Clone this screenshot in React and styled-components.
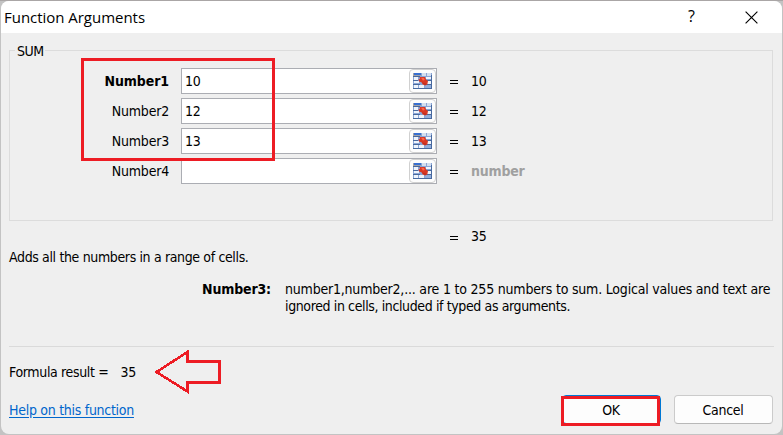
import React from "react";
import styled, { createGlobalStyle } from "styled-components";

const GlobalStyle = createGlobalStyle`
  * { box-sizing: border-box; }
  body { margin: 0; background: #c6c6c6; overflow: hidden; }
`;

const RED = "#ed1c24";

const Desktop = styled.div`
  width: 783px;
  height: 435px;
  padding: 1px;
  background: linear-gradient(#aaa6a6 0 1px, #c3c3c3 1px);
  font: 14px/17px "DejaVu Sans Condensed", "DejaVu Sans", sans-serif;
  color: #000;
`;

const Dialog = styled.main`
  position: relative;
  display: flex;
  flex-direction: column;
  height: 433px;
  border-radius: 8px;
  background: #efefef;
  overflow: hidden;
`;

const TitleBar = styled.header`
  display: flex;
  align-items: center;
  height: 32px;
  padding: 0 24px 0 3px;
  background: #fff;
`;

const Title = styled.h1`
  flex: 1;
  margin: 0;
  font: 400 15px/20px "Open Sans", "Noto Sans", sans-serif;
  letter-spacing: -0.03px;
`;

const HelpMark = styled.span`
  width: 57px;
  margin-top: -2px;
  font: 16px/20px "Open Sans", sans-serif;
`;

const Text = styled.span`
  white-space: nowrap;
  font-weight: ${(p) => (p.$bold ? 700 : 400)};
  letter-spacing: ${(p) => p.$track ?? -0.2}px;
  color: ${(p) => p.$color ?? "inherit"};
`;

const Group = styled.fieldset`
  height: 180px;
  margin: 8px 9px 0 8px;
  padding: 8px 0 0;
  border: 1px solid #dcdcdc;
  min-width: 0;
`;

const Legend = styled.legend`
  margin-left: 5px;
  padding: 2px 1px 0 2px;
  line-height: 17px;
  letter-spacing: -0.5px;
`;

const ArgumentRow = styled.div`
  display: grid;
  grid-template-columns: 159px 256px 10px 1fr;
  column-gap: 12px;
  align-items: center;
  height: 26px;
  margin-bottom: 4px;
`;

const Label = styled(Text)`
  text-align: right;
`;

const Field = styled.div`
  display: flex;
  align-items: center;
  justify-content: space-between;
  height: 26px;
  padding-left: 3px;
  border: 1px solid #abadb3;
  background: #fff;
`;

const Picker = styled.button`
  display: flex;
  align-items: center;
  justify-content: center;
  width: 27px;
  height: 24px;
  padding: 0;
  border: 1px solid #d0d0d0;
  border-radius: 4px;
  background: #fdfdfd;
`;

const Equals = styled.span`
  display: flex;
  width: 8px;
  height: 4px;
  margin: 2px 0 0 1px;
  border-top: 1px solid #000;
  border-bottom: 1px solid #000;
`;

const Total = styled.div`
  display: flex;
  align-items: center;
  gap: 13px;
  height: 17px;
  margin: 7px 0 0 448px;
`;

const Summary = styled.p`
  height: 17px;
  margin: 4px 0 0 8px;
`;

const Description = styled.div`
  display: flex;
  gap: 14px;
  margin: 15px 0 0 201px;
`;

const Lines = styled.div`
  display: flex;
  flex-direction: column;
`;

const Divider = styled.hr`
  width: 765px;
  height: 1px;
  margin: 31px 0 0 8px;
  border: 0;
  background: #dadada;
`;

const Result = styled.div`
  display: flex;
  gap: 12px;
  height: 17px;
  margin: 17px 0 0 8px;
`;

const Footer = styled.footer`
  display: flex;
  align-items: flex-start;
  height: 30px;
  margin: 14px 9px 0 8px;
`;

const HelpLink = styled.a`
  flex: 1;
  margin-top: 7px;
  color: #0066cc;
  text-decoration: underline;
  text-underline-offset: 2px;
  letter-spacing: -0.28px;
`;

const Button = styled.button`
  width: 99px;
  height: 29px;
  margin-left: 13px;
  padding: 2px 1px 0 0;
  border: 1px solid ${(p) => (p.$primary ? "#0078d4" : "#cbcbcb")};
  border-bottom-color: ${(p) => (p.$primary ? "#0078d4" : "#b8b8b8")};
  border-radius: 4px;
  background: #fdfdfd;
  color: #000;
  font: inherit;
  letter-spacing: -0.25px;
`;

const Highlight = styled.div`
  position: absolute;
  left: ${(p) => p.$x}px;
  top: ${(p) => p.$y}px;
  width: ${(p) => p.$w}px;
  height: ${(p) => p.$h}px;
  border: 3px solid ${RED};
  pointer-events: none;
`;

const Arrow = styled.svg`
  position: absolute;
  left: 153px;
  top: 346px;
`;

const CloseIcon = () => (
  <svg width="13" height="13" viewBox="0 0 13 13" fill="none" stroke="#000" strokeWidth="1.15">
    <path d="M.6 .6 12.4 12.4M12.4 .6 .6 12.4" />
  </svg>
);

const RangeIcon = () => (
  <svg width="19" height="16" viewBox="0 0 19 16" shapeRendering="crispEdges">
    <path fill="#8aa5d5" d="M0 0h19v16H0z" />
    <path fill="#a2a3a8" d="M0 0h8v3H0z" />
    <path fill="#376fd2" d="M1 0h7v2H1z" />
    <path fill="#d4dff0" d="M9 0h4v3H9zM14 0h4v3h-4z" />
    <path fill="#eff4fc" d="M1 4h4v3H1zM1 8h5v2H1zM13 4h5v2h-5zM14 8h4v3h-4zM1 12h4v3H1zM6 12h5v3H6z" />
    <path fill="#48699f" d="M0 3h7v1H0zM0 7h5v1H0zM0 11h7v1H0zM13 7h6v1h-6zM12 11h7v1h-7zM0 15h19v1H0zM18 2h1v14h-1z" />
    <path fill="#91addb" d="M12 12h6v3h-6z" />
    <g shapeRendering="auto">
      <path fill="#d93623" d="M6.500 4 12 4 13 6.500 15 8 14.300 11.500 12 12.500 9.500 11.300 8.500 9.200 6 8.500 5.500 6.300 7.200 6z" />
      <path fill="#ff6546" d="m8 4.700 3 .3.8 2-2 .4z" />
      <path fill="#ab2920" d="m9 9 1.700 2 1.700.7.6-1-2-.2z" />
    </g>
  </svg>
);

const ARGUMENTS = [
  { label: "Number1", value: "10", bold: true },
  { label: "Number2", value: "12" },
  { label: "Number3", value: "13" },
  { label: "Number4", value: "" },
];

export default function App() {
  return (
    <Desktop>
      <GlobalStyle />
      <Dialog>
        <TitleBar>
          <Title>Function Arguments</Title>
          <HelpMark>?</HelpMark>
          <CloseIcon />
        </TitleBar>
        <Group>
          <Legend>SUM</Legend>
          {ARGUMENTS.map(({ label, value, bold }) => (
            <ArgumentRow key={label}>
              <Label $bold={bold} $track={bold ? -0.1 : -0.2}>{label}</Label>
              <Field>
                <Text>{value}</Text>
                <Picker aria-label="Select range"><RangeIcon /></Picker>
              </Field>
              <Equals />
              {value ? <Text>{value}</Text> : <Text $bold $color="#a0a0a0">number</Text>}
            </ArgumentRow>
          ))}
        </Group>
        <Total><Equals /><Text>35</Text></Total>
        <Summary><Text $track={-0.36}>Adds all the numbers in a range of cells.</Text></Summary>
        <Description>
          <Text $bold $track={-0.15}>Number3:</Text>
          <Lines>
            <Text>number1,number2,... are 1 to 255 numbers to sum. Logical values and text are</Text>
            <Text $track={-0.38}>ignored in cells, included if typed as arguments.</Text>
          </Lines>
        </Description>
        <Divider />
        <Result><Text $track={-0.35}>Formula result =</Text><Text>35</Text></Result>
        <Footer>
          <HelpLink>Help on this function</HelpLink>
          <Button $primary>OK</Button>
          <Button>Cancel</Button>
        </Footer>
        <Highlight $x={80} $y={57} $w={194} $h={103} />
        <Highlight $x={560} $y={395} $w={99} $h={30} />
        <Arrow width="68" height="50" viewBox="154 347 68 50" fill="none" stroke={RED} strokeWidth="2.6" shapeRendering="crispEdges">
          <path d="M156.500 372 187.500 352V361.500H219.500V382.500H187.500V391.500Z" />
        </Arrow>
      </Dialog>
    </Desktop>
  );
}
